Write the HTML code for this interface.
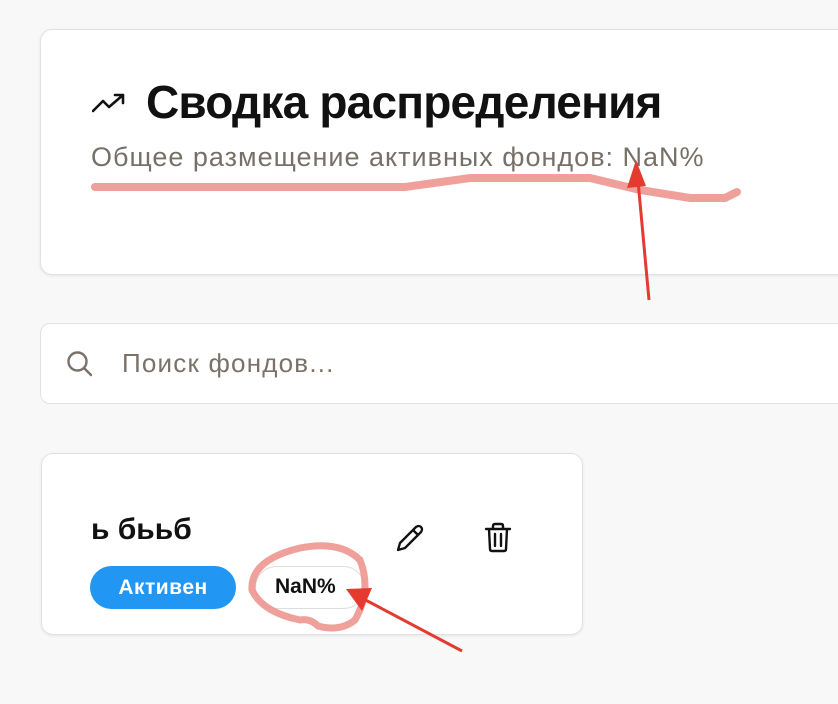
<!DOCTYPE html>
<html><head><meta charset="utf-8"><style>
html,body{margin:0;padding:0;}
body{width:838px;height:704px;background:#f8f8f8;position:relative;overflow:hidden;font-family:"Liberation Sans","DejaVu Sans",sans-serif;}
.card{position:absolute;background:#fff;border:1px solid #e2e2e2;border-radius:12px;box-shadow:0 1px 3px rgba(0,0,0,0.08);}
.t{position:absolute;white-space:nowrap;}
</style></head><body>
<div class="card" style="left:40px;top:29px;width:830px;height:244px;"></div>
<svg style="position:absolute;left:92px;top:92px" width="36" height="22" viewBox="0 0 36 22"><path d="M1 19 L11 9 L17 15 L31 3 M23 3 H31 V11" fill="none" stroke="#111" stroke-width="2.6" stroke-linecap="round" stroke-linejoin="round"/></svg>
<div class="t" style="left:146px;top:75px;font-size:46px;font-weight:bold;color:#111;letter-spacing:-0.8px;">Сводка распределения</div>
<div class="t" style="left:91px;top:142px;font-size:27px;color:#777068;letter-spacing:1px;">Общее размещение активных фондов: NaN%</div>

<div class="card" style="left:40px;top:323px;width:830px;height:79px;border-radius:10px;box-shadow:none;"></div>
<svg style="position:absolute;left:66px;top:350px" width="28" height="28" viewBox="0 0 28 28"><circle cx="11.5" cy="11.5" r="9" fill="none" stroke="#7a7268" stroke-width="2.4"/><path d="M18 18 L25 25" stroke="#7a7268" stroke-width="2.4" stroke-linecap="round"/></svg>
<div class="t" style="left:122px;top:348px;font-size:26px;color:#7a7268;letter-spacing:1.2px;">Поиск фондов...</div>

<div class="card" style="left:41px;top:453px;width:540px;height:180px;"></div>
<div class="t" style="left:91px;top:513px;font-size:30px;font-weight:bold;color:#111;">ь бььб</div>
<svg style="position:absolute;left:394px;top:522px" width="32" height="32" viewBox="0 0 32 32"><path d="M4 28 L6 21 L22 5 Q25 3 27 5 Q29 7 27 10 L11 26 Z M19 8 L24 13" fill="none" stroke="#111" stroke-width="2.3" stroke-linejoin="round"/></svg>
<svg style="position:absolute;left:484px;top:522px" width="28" height="32" viewBox="0 0 28 32"><path d="M2 7 H26 M9 7 V4 Q9 2 11 2 H17 Q19 2 19 4 V7 M5 7 L6 27 Q6 29 8 29 H20 Q22 29 22 27 L23 7 M11 12 V24 M17 12 V24" fill="none" stroke="#111" stroke-width="2.4" stroke-linecap="round" stroke-linejoin="round"/></svg>
<div class="t" style="left:90px;top:566px;width:146px;height:43px;background:#2196f3;border-radius:22px;color:#fff;font-size:21px;font-weight:bold;text-align:center;line-height:43px;letter-spacing:0.5px;">Активен</div>
<div class="t" style="left:255px;top:566px;width:108px;height:41px;border:1px solid #ddd;border-radius:22px;"></div>
<div class="t" style="left:275px;top:575px;font-size:21px;font-weight:bold;color:#111;">NaN%</div>

<svg style="position:absolute;left:0;top:0" width="838" height="704">
<path d="M95 187 L300 187 L405 187 L470 178 L590 178 L640 190 L690 198 L725 198 L737 192" fill="none" stroke="#ec8f88" stroke-opacity="0.85" stroke-width="8" stroke-linecap="round"/>
<path d="M300 548 Q340 540 360 560 Q372 590 355 620 Q340 632 318 626 Q310 618 300 620 Q262 612 252 590 Q250 560 300 548 Z" fill="none" stroke="#ec8f88" stroke-opacity="0.85" stroke-width="7"/>
<path d="M649 300 L637 170" stroke="#e53a2f" stroke-width="3"/>
<path d="M636 160 L627 188 L646 186 Z" fill="#e53a2f"/>
<path d="M462 651 L358 596" stroke="#e53a2f" stroke-width="3"/>
<path d="M346 589 L372 588 L362 611 Z" fill="#e53a2f"/>
</svg>
</body></html>
